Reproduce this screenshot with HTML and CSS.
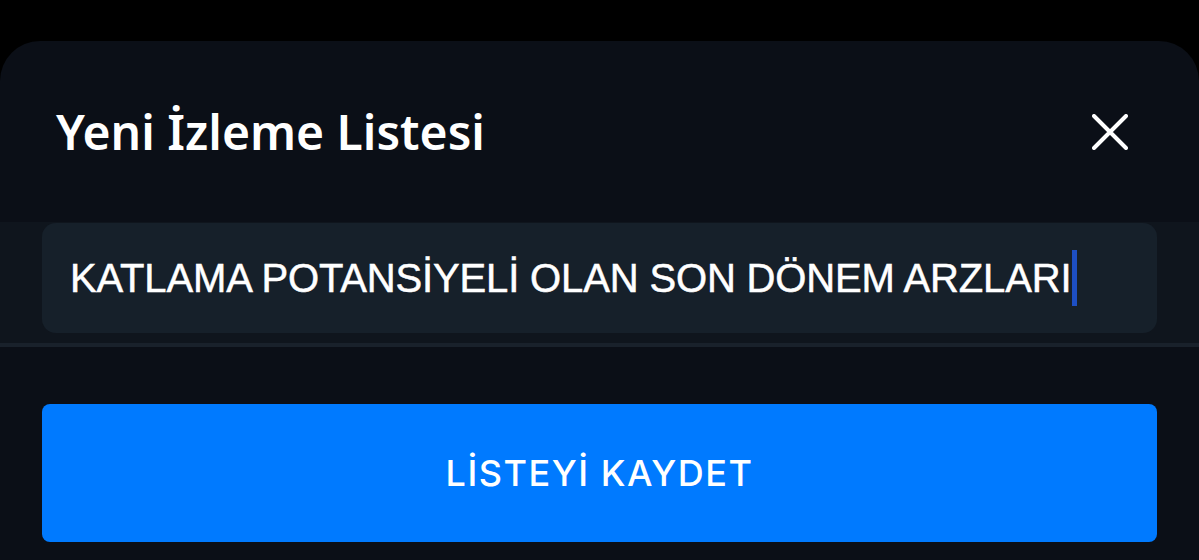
FILE: index.html
```html
<!DOCTYPE html>
<html lang="tr">
<head>
    <meta charset="UTF-8">
    <meta name="viewport" content="width=device-width, initial-scale=1.0">
    <title>Yeni İzleme Listesi</title>
    <link rel="stylesheet" href="styles.css">
</head>
<body>
    <div class="sheet">
        <div class="sheet-header">
            <h1>Yeni İzleme Listesi</h1>
            <button class="close-btn" aria-label="Kapat">
                <svg width="36" height="36" viewBox="0 0 36 36">
                    <path d="M2 2 L34 34 M34 2 L2 34" stroke="#fff" stroke-width="4" stroke-linecap="round" fill="none"/>
                </svg>
            </button>
        </div>

        <div class="name-band">
            <div class="name-field">
                <span class="name-text">KATLAMA POTANSİYELİ OLAN SON DÖNEM ARZLARI</span><span class="caret"></span>
            </div>
        </div>

        <div class="actions">
            <button class="save-btn">LİSTEYİ KAYDET</button>
        </div>
    </div>
</body>
</html>
```

FILE: styles.css
```css
body {
    margin: 0;
    padding: 0;
    background-color: #000;
    font-family: 'Noto Sans', sans-serif;
    color: #fff;
}
.sheet {
    margin-top: 41px;
    height: 519px;
    background: #0b0f17;
    border-radius: 40px 40px 0 0;
    overflow: hidden;
}
.sheet-header {
    height: 181px;
    padding: 0 71px 0 56px;
    display: flex;
    align-items: center;
    justify-content: space-between;
}
h1 {
    margin: 0;
    font-size: 48px;
    font-weight: 600;
    letter-spacing: 0;
}
.close-btn {
    background: none;
    border: none;
    padding: 0;
    width: 36px;
    height: 36px;
    cursor: pointer;
}
.close-btn svg {
    display: block;
}
.name-band {
    height: 125px;
    padding: 1px 42px 0;
    box-sizing: border-box;
    background: #0f151d;
    border-bottom: 4px solid #19212b;
}
.name-field {
    height: 110px;
    background: #16202a;
    border-radius: 14px;
    padding: 0 28px;
    display: flex;
    align-items: center;
}
.name-text {
    font-family: 'Liberation Sans', Arial, sans-serif;
    font-size: 40px;
    letter-spacing: -0.15px;
    color: #fff;
    -webkit-text-stroke: 0.5px #fff;
}
.caret {
    width: 5px;
    height: 56px;
    margin-left: 1px;
    background: #1d4fc4;
}
.actions {
    padding: 57px 42px 0;
}
.save-btn {
    display: block;
    width: 100%;
    height: 138px;
    background-color: #007aff;
    border: none;
    border-radius: 8px;
    color: #fff;
    font-family: 'Inter', sans-serif;
    font-size: 36px;
    font-weight: 500;
    letter-spacing: 1.5px;
    cursor: pointer;
}
```
